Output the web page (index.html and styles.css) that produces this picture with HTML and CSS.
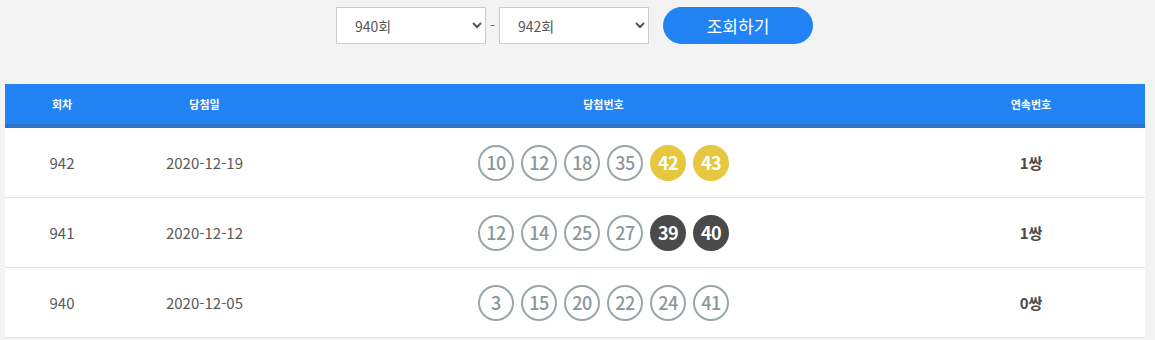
FILE: index.html
```html
<!DOCTYPE html>
<html lang="ko">
<head>
<meta charset="utf-8">
<link rel="stylesheet" href="styles.css">
</head>
<body>
<div class="page">
  <form class="search">
    <select class="sel">
      <option>940회</option>
    </select>
    <span class="dash">-</span>
    <select class="sel">
      <option>942회</option>
    </select>
    <button type="button" class="btn">조회하기</button>
  </form>
  <table class="results">
    <colgroup>
      <col class="c1"><col class="c2"><col class="c3"><col class="c4">
    </colgroup>
    <thead>
      <tr><th>회차</th><th>당첨일</th><th>당첨번호</th><th>연속번호</th></tr>
    </thead>
    <tbody>
      <tr>
        <td>942</td><td>2020-12-19</td>
        <td><div class="balls"><span class="ball">10</span><span class="ball">12</span><span class="ball">18</span><span class="ball">35</span><span class="ball yellow">42</span><span class="ball yellow">43</span></div></td>
        <td class="pair">1쌍</td>
      </tr>
      <tr>
        <td>941</td><td>2020-12-12</td>
        <td><div class="balls"><span class="ball">12</span><span class="ball">14</span><span class="ball">25</span><span class="ball">27</span><span class="ball dark">39</span><span class="ball dark">40</span></div></td>
        <td class="pair">1쌍</td>
      </tr>
      <tr>
        <td>940</td><td>2020-12-05</td>
        <td><div class="balls"><span class="ball">3</span><span class="ball">15</span><span class="ball">20</span><span class="ball">22</span><span class="ball">24</span><span class="ball">41</span></div></td>
        <td class="pair">0쌍</td>
      </tr>
    </tbody>
  </table>
</div>
</body>
</html>
```
FILE: styles.css
```css
html, body {
  margin: 0;
  padding: 0;
  background: #f3f3f3;
  font-family: "Noto Sans CJK KR", "Noto Sans", sans-serif;
}
.page {
  padding: 7px 10px 0 5px;
}
.search {
  display: flex;
  justify-content: center;
  align-items: center;
  margin: 0 0 40px -1px;
  height: 37px;
}
.sel {
  width: 150px;
  height: 37px;
  border: 1px solid #cccccc;
  background: #ffffff;
  color: #555555;
  font-family: "Noto Sans CJK KR", sans-serif;
  font-size: 14px;
  padding: 0 10px 0 14px;
  border-radius: 0;
  margin: 0;
}
.dash {
  width: 13px;
  text-align: center;
  color: #666;
  font-size: 14px;
  line-height: 1;
  margin-top: -2px;
}
.btn {
  margin-left: 14px;
  width: 150px;
  height: 37px;
  border: none;
  border-radius: 19px;
  background: #2283f5;
  color: #fff;
  font-family: "Noto Sans CJK KR", sans-serif;
  font-size: 17px;
  padding: 0;
  line-height: 37px;
}
.results {
  width: 1140px;
  border-collapse: collapse;
  background: #fff;
  table-layout: fixed;
}
.c1 { width: 10%; }
.c2 { width: 15%; }
.c3 { width: 55%; }
.c4 { width: 20%; }
.results th {
  background: #2283f5;
  color: #fff;
  font-size: 11px;
  font-weight: bold;
  height: 40px;
  padding: 0;
  border-bottom: 4px solid #2b74c9;
  text-align: center;
}
.results td {
  height: 69px;
  padding: 0;
  border-bottom: 1px solid #e3e3e3;
  text-align: center;
  color: #5a5a5a;
  font-size: 15px;
}
.results td.pair {
  font-weight: bold;
  color: #4a4a4a;
}
.balls {
  display: flex;
  justify-content: center;
  gap: 7px;
}
.ball {
  box-sizing: border-box;
  width: 36px;
  height: 36px;
  border-radius: 50%;
  border: 2px solid #9aa6a8;
  color: #8a979a;
  font-size: 18px;
  font-weight: 500;
  line-height: 31px;
  text-align: center;
  letter-spacing: -0.5px;
}
.ball.yellow {
  background: #e6c73f;
  border-color: #e6c73f;
  color: #fff;
  font-weight: bold;
}
.ball.dark {
  background: #4a4a4a;
  border-color: #4a4a4a;
  color: #fff;
  font-weight: bold;
}
```
